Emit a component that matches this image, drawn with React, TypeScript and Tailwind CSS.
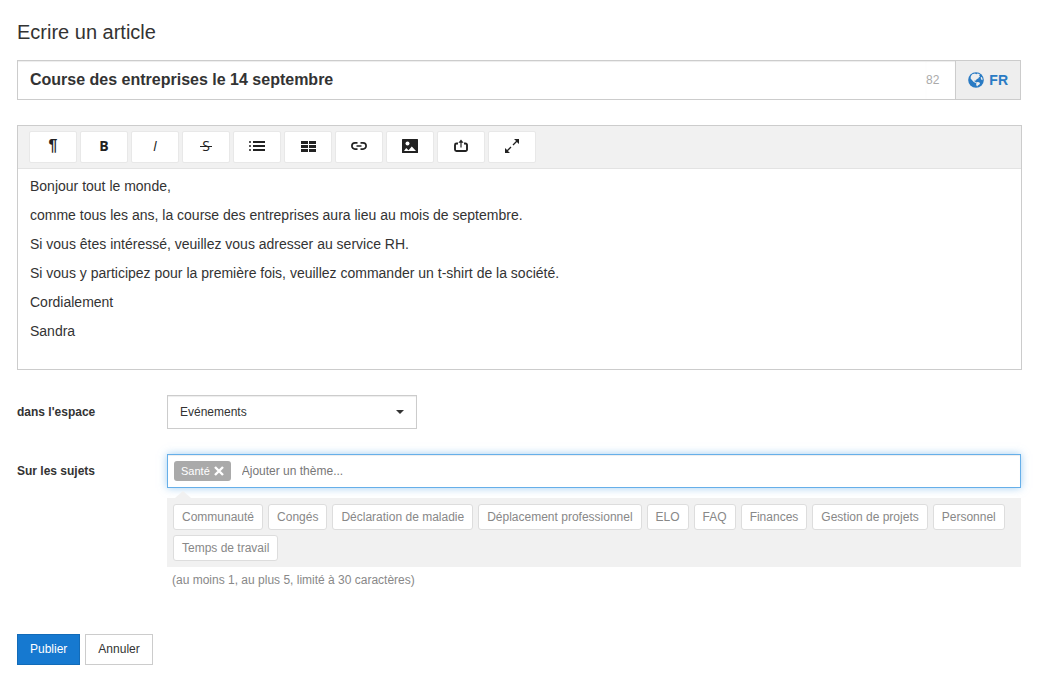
import { useState } from "react";
import type { ReactNode } from "react";

const paragraphs = [
  "Bonjour tout le monde,",
  "comme tous les ans, la course des entreprises aura lieu au mois de septembre.",
  "Si vous êtes intéressé, veuillez vous adresser au service RH.",
  "Si vous y participez pour la première fois, veuillez commander un t-shirt de la société.",
  "Cordialement",
  "Sandra",
];

const topics = [
  "Communauté",
  "Congés",
  "Déclaration de maladie",
  "Déplacement professionnel",
  "ELO",
  "FAQ",
  "Finances",
  "Gestion de projets",
  "Personnel",
  "Temps de travail",
];

const GlobeIcon = () => (
  <svg width="16" height="16" viewBox="0 0 16 16">
    <circle cx="8" cy="8" r="7.8" fill="currentColor" />
    <path
      d="M4.2 2.2L7 1.4l1.2.8 1.4-.7 2.2.7-.6 1.6.9.9-1.2.5-.6 1.3-1.5.5-.9 1.4-1.5.2.4 1.2 1.3.3.2 1-1-.3-1.6-.9L3.9 8.1 2.6 6.6l.2-2.3z"
      fill="#eee"
    />
    <path d="M8.3 10.2l1.9-.3 1.9 1.1-.7 1.5-1.5.9-.8 1.2-.9-1.7z" fill="#eee" />
    <path d="M12.6 5.4l1.3-.3.7 1.9-.2 1.3-1.2-.8z" fill="#eee" />
  </svg>
);

const ListIcon = () => (
  <svg width="16" height="12" viewBox="0 0 16 12" fill="currentColor">
    <path d="M4 1h12v2H4zM4 5h12v2H4zM4 9h12v2H4z" />
    <circle cx="1" cy="2" r="1" />
    <circle cx="1" cy="6" r="1" />
    <circle cx="1" cy="10" r="1" />
  </svg>
);

const TableIcon = () => (
  <svg width="15" height="11" viewBox="0 0 15 11" fill="currentColor">
    <path d="M0 0h7v3H0zM8 0h7v3H8zM0 4h7v3H0zM8 4h7v3H8zM0 8h7v3H0zM8 8h7v3H8z" />
  </svg>
);

const LinkIcon = () => (
  <svg width="16" height="8" viewBox="0 0 16 8" fill="none" stroke="currentColor" strokeWidth="1.7">
    <path d="M6.5 .9H4a3.1 3.1 0 0 0 0 6.2h2.5M9.5 .9H12a3.1 3.1 0 0 1 0 6.2H9.5M5.5 4h5" />
  </svg>
);

const PictureIcon = () => (
  <svg width="16" height="14" viewBox="0 0 16 14" fill="currentColor">
    <rect width="16" height="14" rx=".5" />
    <circle cx="5.5" cy="4.5" r="2" fill="#fff" />
    <path d="M2 12l2.2-3 2.3 2.2 3.3-3.8L14 12z" fill="#fff" />
  </svg>
);

const ShareIcon = () => (
  <svg width="16" height="14" viewBox="0 0 16 14" fill="none" stroke="currentColor">
    <path d="M5 4.5H3.5A1.5 1.5 0 0 0 2 6v4.5A1.5 1.5 0 0 0 3.5 12h9a1.5 1.5 0 0 0 1.5-1.5V6a1.5 1.5 0 0 0-1.5-1.5H11" strokeWidth="1.9" />
    <path d="M8 8.5V2" strokeWidth="1.2" />
    <path d="M8 .5l2.6 3.2H5.4z" fill="currentColor" stroke="none" />
  </svg>
);

const ExpandIcon = () => (
  <svg width="14" height="14" viewBox="0 0 14 14" fill="currentColor">
    <path d="M8 6l4-4M6 8l-4 4" stroke="currentColor" strokeWidth="1.3" />
    <path d="M9 0h5v5l-1.6-1.6L10.600 1.600zM0 9v5h5l-1.600-1.600L1.600 10.600z" />
  </svg>
);

const tools: { label: string; icon: ReactNode }[] = [
  { label: "Format", icon: <span className="text-base leading-5 font-bold">¶</span> },
  { label: "Gras", icon: <span className="font-['Open_Sans',sans-serif] font-bold">B</span> },
  { label: "Italique", icon: <span className="font-['Open_Sans',sans-serif] font-medium italic">I</span> },
  {
    label: "Barré",
    icon: (
      <span className="relative font-['Open_Sans',sans-serif]">
        S
        <span className="absolute top-1/2 -left-[2px] -right-[2px] h-px bg-current" />
      </span>
    ),
  },
  { label: "Liste", icon: <ListIcon /> },
  { label: "Tableau", icon: <TableIcon /> },
  { label: "Lien", icon: <LinkIcon /> },
  { label: "Image", icon: <PictureIcon /> },
  { label: "Insérer", icon: <ShareIcon /> },
  { label: "Plein écran", icon: <ExpandIcon /> },
];

const Toolbar = () => (
  <div className="flex flex-wrap gap-[3px] border-b border-[#e3e3e3] bg-[#f1f1f1] px-[11px] py-[5px]">
    {tools.map(({ label, icon }) => (
      <button
        key={label}
        type="button"
        aria-label={label}
        className="flex h-8 w-12 items-center justify-center rounded-xs border border-[#e8e8e8] bg-white pb-[2px] text-sm text-[#222]"
      >
        {icon}
      </button>
    ))}
  </div>
);

export default function App() {
  const [title, setTitle] = useState("Course des entreprises le 14 septembre");

  return (
    <form
      onSubmit={(e) => e.preventDefault()}
      className="min-h-screen bg-white pt-5 pr-[22px] pb-4 pl-[17px] font-['Liberation_Sans',Arial,sans-serif] text-xs text-[#333]"
    >
      <h1 className="text-xl leading-6">Ecrire un article</h1>

      {/* Title and language */}
      <div className="mt-4 flex h-10 border border-[#ccc]">
        <input
          aria-label="Titre"
          value={title}
          onChange={(e) => setTitle(e.target.value)}
          className="min-w-0 flex-1 px-3 text-base font-bold shadow-[inset_0_1px_1px_rgba(0,0,0,0.075)] outline-none"
        />
        <span className="flex items-center pr-4 text-[#aaa] shadow-[inset_0_1px_1px_rgba(0,0,0,0.075)]">
          {120 - title.length}
        </span>
        <button
          type="button"
          className="flex items-center gap-[5px] border-l border-[#ccc] bg-[#eee] px-3 text-sm font-bold text-[#2a7bc4]"
        >
          <GlobeIcon />
          FR
        </button>
      </div>

      {/* Article body */}
      <div className="mt-[25px] -mr-px border border-[#ccc]">
        <Toolbar />
        <div
          contentEditable
          suppressContentEditableWarning
          role="textbox"
          aria-multiline="true"
          aria-label="Article"
          className="min-h-[200px] space-y-[9px] px-3 pt-[7px] text-sm leading-5 outline-none"
        >
          {paragraphs.map((text) => (
            <p key={text}>{text}</p>
          ))}
        </div>
      </div>

      <div className="mt-[25px] flex items-center">
        <label htmlFor="space" className="w-[150px] shrink-0 font-bold">
          dans l'espace
        </label>
        <div className="relative w-[250px]">
          <select
            id="space"
            className="h-[34px] w-full appearance-none border border-[#ccc] bg-white px-3 shadow-[inset_0_1px_1px_rgba(0,0,0,0.075)] outline-none"
          >
            <option>Evénements</option>
          </select>
          <span className="pointer-events-none absolute top-[15px] right-[13px] border-x-4 border-t-4 border-x-transparent border-t-[#333]" />
        </div>
      </div>

      <div className="mt-[25px] flex items-start">
        <label htmlFor="topic" className="w-[150px] shrink-0 leading-[34px] font-bold">
          Sur les sujets
        </label>
        <div className="min-w-0 flex-1">
          <div className="flex h-[34px] items-center border border-[#66afe9] px-[6px] shadow-[inset_0_1px_1px_rgba(0,0,0,0.075),0_0_8px_rgba(102,175,233,0.6)]">
            <span className="flex h-5 items-center gap-1 rounded-[3px] bg-[#aaa] px-[7px] text-[11px] text-white">
              Santé
              <button type="button" aria-label="Retirer Santé">
                <svg width="10" height="10" viewBox="0 0 10 10" stroke="currentColor" strokeWidth="2.4">
                  <path d="M1 1l8 8M9 1L1 9" />
                </svg>
              </button>
            </span>
            <input
              id="topic"
              placeholder="Ajouter un thème..."
              className="ml-[11px] min-w-0 flex-1 outline-none placeholder:text-[#777]"
            />
          </div>

          <div className="relative mt-[10px] flex flex-wrap gap-[5px] bg-[#f1f1f1] p-[6px]">
            <span className="absolute -top-[7px] left-2 border-x-8 border-b-[7px] border-x-transparent border-b-[#f1f1f1]" />
            {topics.map((topic) => (
              <button
                key={topic}
                type="button"
                className="h-[26px] rounded-[3px] border border-[#ddd] bg-white px-2 text-[#888]"
              >
                {topic}
              </button>
            ))}
          </div>
          <p className="mt-[5px] px-[5px] leading-4 text-[#888]">
            (au moins 1, au plus 5, limité à 30 caractères)
          </p>
        </div>
      </div>

      <div className="mt-[46px] flex gap-[5px]">
        <button type="submit" className="h-[31px] border border-[#126bb8] bg-[#1679d0] px-3 pb-px text-white">
          Publier
        </button>
        <button type="button" className="h-[31px] border border-[#ccc] bg-white px-3 pb-px">
          Annuler
        </button>
      </div>
    </form>
  );
}
